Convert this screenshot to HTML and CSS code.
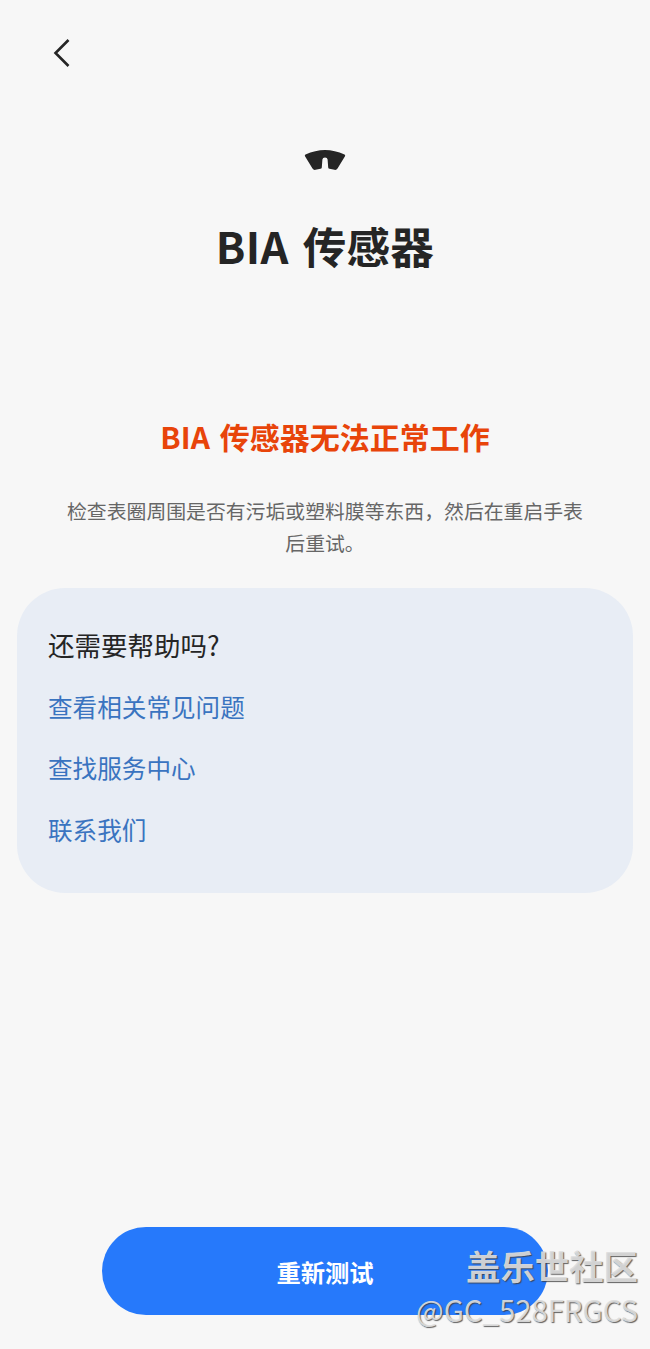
FILE: index.html
```html
<!DOCTYPE html>
<html lang="zh-CN">
<head>
  <meta charset="UTF-8">
  <meta name="viewport" content="width=device-width, initial-scale=1.0">
  <title>BIA 传感器</title>
  <link rel="stylesheet" href="styles.css">
</head>
<body>
  <div class="page">
    <header class="top-bar">
      <button type="button" class="back" aria-label="返回">
        <svg width="20" height="30" viewBox="0 0 20 30"><path d="M16.5 2 L3.5 15 L16.5 28" fill="none" stroke="#252525" stroke-width="2.6"/></svg>
      </button>
    </header>

    <div class="sensor-icon">
      <svg width="42" height="24" viewBox="0 0 42 24"><path d="M1.5 6.5 Q21 -2.5 40.5 6.5 Q41.5 7.2 41 8.2 L33.5 20.5 Q32.5 22.2 30.5 21.8 L25.5 20.8 Q24.4 20.6 24.2 19.4 L23.6 11.5 Q23.4 9.6 21 9.6 Q18.6 9.6 18.4 11.5 L17.8 19.4 Q17.6 20.6 16.5 20.8 L11.5 21.8 Q9.5 22.2 8.5 20.5 L1 8.2 Q0.5 7.2 1.5 6.5 Z" fill="#252525"/></svg>
    </div>
    <h1 class="title">BIA 传感器</h1>

    <h2 class="error">BIA 传感器无法正常工作</h2>
    <p class="desc">检查表圈周围是否有污垢或塑料膜等东西，然后在重启手表后重试。</p>

    <section class="help">
      <h3>还需要帮助吗?</h3>
      <a href="#">查看相关常见问题</a>
      <a href="#">查找服务中心</a>
      <a href="#">联系我们</a>
    </section>

    <div class="bottom">
      <button type="button" class="retry">重新测试</button>
    </div>

    <div class="watermark">
      <div class="wm-name">盖乐世社区</div>
      <div class="wm-user">@GC_528FRGCS</div>
    </div>
  </div>
</body>
</html>
```

FILE: styles.css
```css
* {
  box-sizing: border-box;
}

body {
  margin: 0;
  background-color: #f7f7f7;
  font-family: "Noto Sans CJK SC", "Noto Sans", sans-serif;
  color: #252525;
}

.page {
  position: relative;
  display: flex;
  flex-direction: column;
  height: 1349px;
  overflow: hidden;
}

.top-bar {
  padding: 38px 0 0 52px;
}

.back {
  display: block;
  padding: 0;
  border: none;
  background: none;
}

.sensor-icon {
  display: flex;
  justify-content: center;
  margin-top: 77px;
}

.sensor-icon svg {
  display: block;
}

.title {
  margin: 44px 0 0;
  font-size: 43.5px;
  line-height: 60px;
  font-weight: 700;
  word-spacing: 4px;
  text-align: center;
}

.title::first-line {
  letter-spacing: 0.3px;
}

.error {
  margin: 138px 0 0;
  font-size: 30px;
  line-height: 44px;
  font-weight: 700;
  word-spacing: 3px;
  color: #e8440a;
  text-align: center;
}

.desc {
  margin: 37px auto 0;
  width: 530px;
  font-size: 19.85px;
  line-height: 32px;
  color: #666;
  text-align: center;
}

.help {
  display: flex;
  flex-direction: column;
  height: 305px;
  margin: 29px 17px 0;
  padding: 36px 31px 0;
  border-radius: 48px;
  background-color: #e8edf5;
}

.help h3 {
  margin: 0;
  font-size: 26.5px;
  line-height: 42px;
  font-weight: 400;
  color: #252525;
}

.help a {
  margin-top: 19.5px;
  font-size: 24.6px;
  line-height: 42px;
  color: #3a74c0;
  text-decoration: none;
}

.help h3 + a {
  margin-top: 18.5px;
}

.bottom {
  display: flex;
  justify-content: center;
  margin-top: auto;
  padding-bottom: 34px;
}

.retry {
  width: 446px;
  height: 88px;
  border: none;
  border-radius: 44px;
  background-color: #2679fb;
  color: #fff;
  font-family: inherit;
  font-size: 24.3px;
  font-weight: 700;
}

.watermark {
  position: absolute;
  right: 12px;
  bottom: 20px;
  text-align: right;
  color: rgba(222, 222, 222, 0.92);
  text-shadow: 1px 1px 1px rgba(60, 60, 60, 0.8);
}

.wm-name {
  font-size: 34.4px;
  line-height: 48px;
  font-weight: 700;
}

.wm-user {
  font-size: 29.3px;
  line-height: 40px;
}
```
